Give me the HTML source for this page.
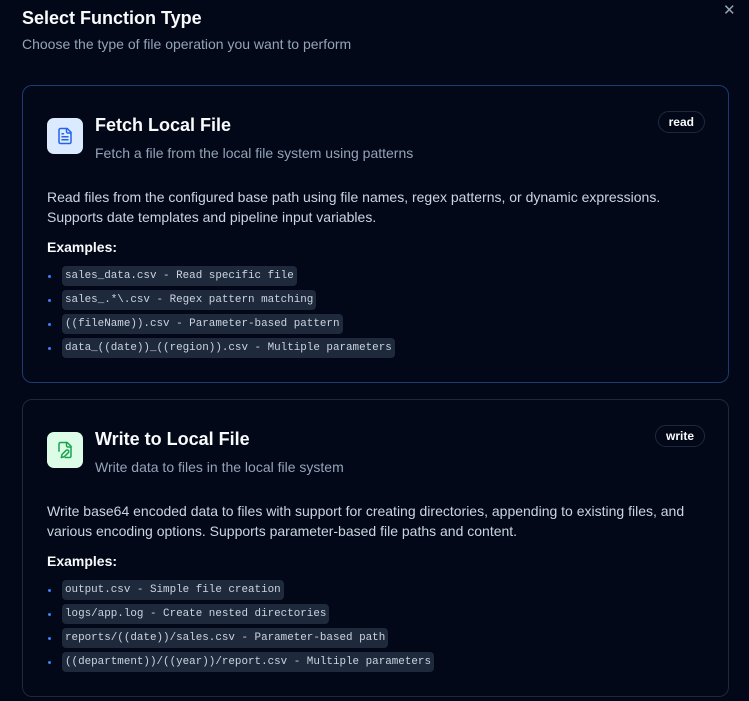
<!DOCTYPE html>
<html><head><style>
*{box-sizing:border-box;margin:0;padding:0}
body{width:749px;height:701px;background:#020817;font-family:"Liberation Sans",sans-serif;color:#f8fafc;position:relative;overflow:hidden}
h1{position:absolute;left:22px;top:8px;font-size:18px;font-weight:700;color:#f8fafc}
.sub{position:absolute;left:22px;top:36px;font-size:14px;color:#94a3b8}
.x{position:absolute;left:723px;top:1px;font-size:15px;color:#94a3b8}
.card{position:absolute;left:22px;width:707px;height:298px;border:1px solid #1e293b;border-radius:10px}
.c1{top:85px;border-color:#1e3a70}
.c2{top:399px}
.icon{position:absolute;left:24px;top:32px;width:36px;height:36px;border-radius:7px;display:flex;align-items:center;justify-content:center}
.t{position:absolute;left:72px;top:29px;font-size:18px;font-weight:700;color:#f8fafc}
.s{position:absolute;left:72px;top:59px;font-size:14px;color:#94a3b8}
.badge{position:absolute;right:23px;top:25px;height:22px;padding:0 10px;border:1px solid #1e293b;border-radius:11px;font-size:12px;font-weight:700;line-height:20px;color:#f8fafc}
.d{position:absolute;left:24px;top:101px;width:650px;font-size:14px;line-height:20px;color:#cbd5e1}
.ex{position:absolute;left:24px;top:153px;font-size:14px;font-weight:700;color:#f8fafc}
ul{position:absolute;left:24px;top:178px;list-style:none}
li{height:24px;display:flex;align-items:center}
li:before{content:"";width:3px;height:3px;border-radius:50%;background:#3b82f6;margin-right:11px;margin-left:1px}
code{font-family:"Liberation Mono",monospace;font-size:10.9px;background:#1e293b;color:#cbd5e1;border-radius:4px;padding:3px 3px;line-height:14px}
</style></head><body>
<h1>Select Function Type</h1>
<div class="sub">Choose the type of file operation you want to perform</div>
<div class="x">✕</div>

<div class="card c1">
<div class="icon" style="background:#dbeafe"><svg width="18" height="18" viewBox="0 0 24 24" fill="none" stroke="#2563eb" stroke-width="2" stroke-linecap="round" stroke-linejoin="round"><path d="M15 2H6a2 2 0 0 0-2 2v16a2 2 0 0 0 2 2h12a2 2 0 0 0 2-2V7z"/><path d="M14 2v4a2 2 0 0 0 2 2h4"/><path d="M10 9H8M16 13H8M16 17H8"/></svg></div>
<div class="t">Fetch Local File</div>
<div class="s">Fetch a file from the local file system using patterns</div>
<div class="badge">read</div>
<div class="d">Read files from the configured base path using file names, regex patterns, or dynamic expressions. Supports date templates and pipeline input variables.</div>
<div class="ex">Examples:</div>
<ul><li><code>sales_data.csv - Read specific file</code></li><li><code>sales_.*\.csv - Regex pattern matching</code></li><li><code>((fileName)).csv - Parameter-based pattern</code></li><li><code>data_((date))_((region)).csv - Multiple parameters</code></li></ul>
</div>

<div class="card c2">
<div class="icon" style="background:#dcfce7"><svg width="18" height="18" viewBox="0 0 24 24" fill="none" stroke="#16a34a" stroke-width="2" stroke-linecap="round" stroke-linejoin="round"><path d="M12.5 22H18a2 2 0 0 0 2-2V7l-5-5H6a2 2 0 0 0-2 2v9.5"/><path d="M14 2v4a2 2 0 0 0 2 2h4"/><path d="M13.4 12.6a2 2 0 0 1 3 3L11 21l-4 1 1-4z"/></svg></div>
<div class="t">Write to Local File</div>
<div class="s">Write data to files in the local file system</div>
<div class="badge">write</div>
<div class="d">Write base64 encoded data to files with support for creating directories, appending to existing files, and various encoding options. Supports parameter-based file paths and content.</div>
<div class="ex">Examples:</div>
<ul><li><code>output.csv - Simple file creation</code></li><li><code>logs/app.log - Create nested directories</code></li><li><code>reports/((date))/sales.csv - Parameter-based path</code></li><li><code>((department))/((year))/report.csv - Multiple parameters</code></li></ul>
</div>
</body></html>
